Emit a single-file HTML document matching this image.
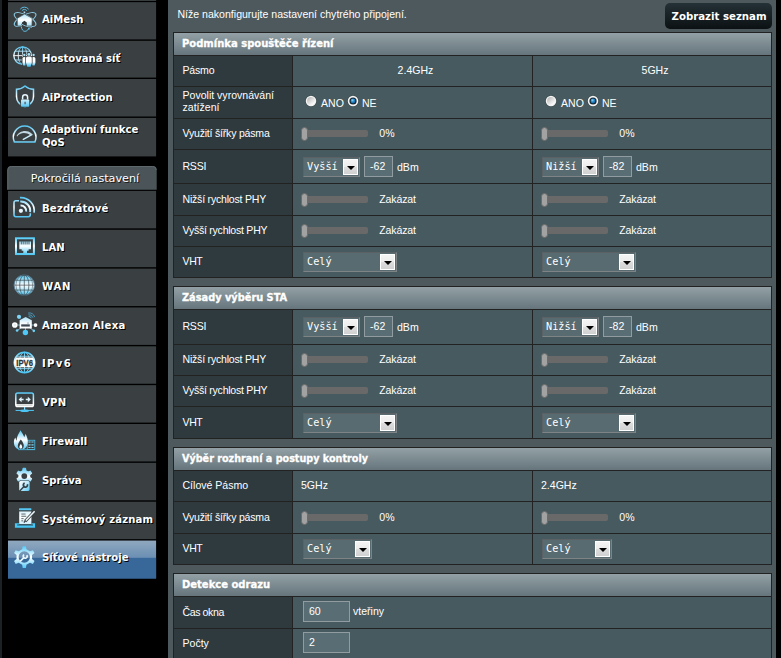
<!DOCTYPE html>
<html lang="cs"><head><meta charset="utf-8"><title>Smart Connect</title>
<style>
html,body{margin:0;padding:0;}
body{width:781px;height:658px;overflow:hidden;background:#000;position:relative;font-family:"Liberation Sans",Arial,sans-serif;font-size:10.55px;color:#fff;}
div{position:absolute;box-sizing:border-box;}
svg{position:absolute;left:0;top:0;}
.mt{left:42px;font-family:'DejaVu Sans',Verdana,sans-serif;font-weight:bold;font-size:10.1px;color:#fff;text-shadow:1px 1px 0 #000;white-space:nowrap;line-height:12.8px;}
.tb{background:#222;}
.hd{background:linear-gradient(to bottom,#93a1a6 0%,#66757c 100%);font-family:'DejaVu Sans',Verdana,sans-serif;font-weight:bold;font-size:10px;color:#fff;padding-left:8px;white-space:nowrap;-webkit-text-stroke:0.3px #fff;}
.th{background:#2f3a3e;padding-left:8px;line-height:12.8px;}
.th span.l2{line-height:11.9px;}
.th span{position:absolute;left:8.5px;white-space:nowrap;}
.td{background:#475a5f;}
.t{white-space:nowrap;line-height:13px;}
.trk{height:7px;border-radius:2px;background:#696969;}
.knb{width:7px;height:14px;border-radius:3.5px;background:#a2a2a2;border:1px solid #6c6c6c;}
.sel{background:#576b71;border:1px solid #5b6164;border-right-color:#7e8486;border-bottom-color:#7e8486;font-family:"DejaVu Sans Mono","Liberation Mono",monospace;font-size:10.2px;color:#fff;line-height:18px;padding-left:3px;white-space:nowrap;}
.arr{right:1px;top:1px;bottom:1px;width:15px;background:linear-gradient(to bottom,#f4f4f4 0%,#ececec 50%,#dddddd 50%,#d1d1d1 100%);border:1px solid #fff;}
.arr:after{content:"";position:absolute;left:2.5px;top:6px;border-left:4px solid transparent;border-right:4px solid transparent;border-top:4.5px solid #000;}
.inp{background:#596e74;border:1px solid #909ca0;color:#fff;padding-left:5px;white-space:nowrap;}
.rad{width:11px;height:11px;border-radius:50%;background:radial-gradient(circle at 55% 62%,#f8f8f8 0%,#e6e6e6 40%,#b4b4b4 80%,#8e9496 100%);box-shadow:0 0 0 0.5px #7b8385;}
.rad.on:after{content:"";position:absolute;left:2.8px;top:2.6px;width:5.4px;height:5.4px;border-radius:50%;background:radial-gradient(circle at 45% 35%,#6fc0ee 0%,#1b73b5 55%,#0e4f86 100%);}
</style></head>
<body>
<div style="left:0;top:0;width:2px;height:658px;background:#1b2124"></div>
<svg width="168" height="658" viewBox="0 0 168 658"><defs><linearGradient id="radg" x1="0.15" y1="0.1" x2="0.85" y2="0.9"><stop offset="0" stop-color="#bdbdbd"/><stop offset="1" stop-color="#ffffff"/></linearGradient><radialGradient id="radb" cx="0.4" cy="0.35" r="0.7"><stop offset="0" stop-color="#8ad2f6"/><stop offset="0.5" stop-color="#2288cc"/><stop offset="1" stop-color="#0e5c98"/></radialGradient><linearGradient id="selg" x1="0" y1="0" x2="0" y2="1"><stop offset="0" stop-color="#90a8bf"/><stop offset="0.45" stop-color="#6b8fb3"/><stop offset="0.451" stop-color="#386899"/><stop offset="1" stop-color="#386899"/></linearGradient></defs><rect x="8.00" y="0" width="148.10" height="0.95" fill="#3a4042"/><rect x="8.00" y="2.15" width="148.10" height="37.25" fill="#3a4042"/><rect x="8.00" y="40.80" width="148.10" height="36.80" fill="#3a4042"/><rect x="8.00" y="79.00" width="148.10" height="37.50" fill="#3a4042"/><rect x="8.00" y="117.90" width="148.10" height="38.50" fill="#3a4042"/><rect x="8.00" y="190.90" width="148.10" height="37.45" fill="#3a4042"/><rect x="8.00" y="229.75" width="148.10" height="37.45" fill="#3a4042"/><rect x="8.00" y="268.60" width="148.10" height="37.45" fill="#3a4042"/><rect x="8.00" y="307.45" width="148.10" height="37.45" fill="#3a4042"/><rect x="8.00" y="346.30" width="148.10" height="37.45" fill="#3a4042"/><rect x="8.00" y="385.15" width="148.10" height="37.45" fill="#3a4042"/><rect x="8.00" y="424.00" width="148.10" height="37.45" fill="#3a4042"/><rect x="8.00" y="462.85" width="148.10" height="37.45" fill="#3a4042"/><rect x="8.00" y="501.70" width="148.10" height="37.45" fill="#3a4042"/><rect x="8.00" y="540.55" width="148.10" height="37.95" fill="url(#selg)"/><rect x="8.00" y="557.85" width="148.10" height="20.65" fill="#386899"/><path d="M7.3,189.7 V170 a4,4 0 0 1 4,-4 H152.7 a4,4 0 0 1 4,4 V189.7 Z" fill="#4b5458"/><path d="M7.8,189.7 V170 a3.5,3.5 0 0 1 3.5,-3.5 H152.7 a3.5,3.5 0 0 1 3.5,3.5" fill="none" stroke="#5e686c" stroke-width="1"/><defs><linearGradient id="g_aimesh" gradientUnits="userSpaceOnUse" x1="0" y1="13.5" x2="0" y2="26.5"><stop offset="0" stop-color="#a8e0f7"/><stop offset="0.50" stop-color="#ffffff"/><stop offset="1" stop-color="#9ad9f5"/></linearGradient><linearGradient id="g_guest2" gradientUnits="userSpaceOnUse" x1="0" y1="56" x2="0" y2="66"><stop offset="0" stop-color="#e8f7fd"/><stop offset="0.25" stop-color="#ffffff"/><stop offset="0.6" stop-color="#ffffff"/><stop offset="1" stop-color="#4fc3f3"/></linearGradient><linearGradient id="g_guest" gradientUnits="userSpaceOnUse" x1="0" y1="46.5" x2="0" y2="65.5"><stop offset="0" stop-color="#4fc3f3"/><stop offset="0.50" stop-color="#ffffff"/><stop offset="1" stop-color="#4fc3f3"/></linearGradient><linearGradient id="g_aiprot" gradientUnits="userSpaceOnUse" x1="0" y1="86.0" x2="0" y2="107.0"><stop offset="0" stop-color="#4fc3f3"/><stop offset="0.50" stop-color="#ffffff"/><stop offset="1" stop-color="#4fc3f3"/></linearGradient><linearGradient id="g_qos" gradientUnits="userSpaceOnUse" x1="0" y1="126.0" x2="0" y2="143.0"><stop offset="0" stop-color="#55c6f4"/><stop offset="0.60" stop-color="#ffffff"/><stop offset="1" stop-color="#55c6f4"/></linearGradient><linearGradient id="g_wifi" gradientUnits="userSpaceOnUse" x1="0" y1="197.0" x2="0" y2="217.0"><stop offset="0" stop-color="#4fc3f3"/><stop offset="0.50" stop-color="#ffffff"/><stop offset="1" stop-color="#4fc3f3"/></linearGradient><linearGradient id="g_lan" gradientUnits="userSpaceOnUse" x1="0" y1="237.0" x2="0" y2="255.0"><stop offset="0" stop-color="#45c6f5"/><stop offset="0.50" stop-color="#ffffff"/><stop offset="1" stop-color="#45c6f5"/></linearGradient><linearGradient id="g_wan" gradientUnits="userSpaceOnUse" x1="0" y1="275.0" x2="0" y2="295.3"><stop offset="0" stop-color="#4ec3ee"/><stop offset="0.50" stop-color="#ffffff"/><stop offset="1" stop-color="#4ec3ee"/></linearGradient><linearGradient id="g_alexa" gradientUnits="userSpaceOnUse" x1="0" y1="317.0" x2="0" y2="328.5"><stop offset="0" stop-color="#a8e0f7"/><stop offset="0.50" stop-color="#f4fbfe"/><stop offset="1" stop-color="#ffffff"/></linearGradient><linearGradient id="g_ipv6" gradientUnits="userSpaceOnUse" x1="0" y1="352.0" x2="0" y2="372.8"><stop offset="0" stop-color="#48c4f4"/><stop offset="0.50" stop-color="#ffffff"/><stop offset="1" stop-color="#48c4f4"/></linearGradient><linearGradient id="g_vpn" gradientUnits="userSpaceOnUse" x1="0" y1="392.0" x2="0" y2="407.0"><stop offset="0" stop-color="#4dc6f6"/><stop offset="0.70" stop-color="#ffffff"/><stop offset="1" stop-color="#ffffff"/></linearGradient><linearGradient id="g_fw" gradientUnits="userSpaceOnUse" x1="0" y1="430.0" x2="0" y2="449.5"><stop offset="0" stop-color="#55c8f5"/><stop offset="0.50" stop-color="#ffffff"/><stop offset="1" stop-color="#55c8f5"/></linearGradient><linearGradient id="g_admin2" gradientUnits="userSpaceOnUse" x1="19" y1="481.0" x2="30" y2="491.0"><stop offset="0" stop-color="#ffffff"/><stop offset="0.5" stop-color="#bfe9fa"/><stop offset="1" stop-color="#4fc8f7"/></linearGradient><linearGradient id="g_admin" gradientUnits="userSpaceOnUse" x1="0" y1="468.0" x2="0" y2="484.0"><stop offset="0" stop-color="#55c8f5"/><stop offset="0.55" stop-color="#ffffff"/><stop offset="1" stop-color="#55c8f5"/></linearGradient><linearGradient id="g_log" gradientUnits="userSpaceOnUse" x1="0" y1="511.0" x2="0" y2="524.0"><stop offset="0" stop-color="#d9f2fc"/><stop offset="0.50" stop-color="#ffffff"/><stop offset="1" stop-color="#cfeefb"/></linearGradient><linearGradient id="g_tools" gradientUnits="userSpaceOnUse" x1="0" y1="546.0" x2="0" y2="568.0"><stop offset="0" stop-color="#4fcaf9"/><stop offset="0.50" stop-color="#ffffff"/><stop offset="1" stop-color="#4fcaf9"/></linearGradient></defs><g transform="translate(0,0.15)"><g fill="none" stroke="#8fd0ec" stroke-width="1" opacity="0.95"><ellipse cx="25.1" cy="19.3" rx="12.1" ry="4.5" transform="rotate(28 25.1 19.3)"/><ellipse cx="25.1" cy="19.3" rx="12.1" ry="4.5" transform="rotate(-28 25.1 19.3)"/></g><path d="M24.6,13.9 L32.2,18.1 L32.0,25.9 L17.3,25.9 L17.2,18.1 Z" fill="url(#g_aimesh)" stroke="#3a4042" stroke-width="0.7"/><path d="M22,25.9 V22.4 L24.4,20.7 L26.8,22.4 V25.9 Z" fill="#2f3538"/><path d="M21.2,26.3 C21.6,29.3 23.2,31.2 24.8,31.2 C26.3,31.2 27.6,30.3 28.6,28.6" fill="none" stroke="#5fc2ea" stroke-width="1"/><path d="M21.4,23.9 C23.4,25.6 27,26.9 31,27.3" fill="none" stroke="#3a4042" stroke-width="1.3"/><path d="M21.2,23.6 C23.4,25.3 27,26.6 32,27.1" fill="none" stroke="#9fd8f0" stroke-width="0.8"/><circle cx="28.9" cy="28.5" r="0.9" fill="#5fc2ea"/><circle cx="24.4" cy="12.2" r="1.1" fill="#bfe6f6" stroke="#3a4042" stroke-width="0.5"/><path d="M21.94,10.58 A3.00,3.00 0 0 1 26.86,10.58" fill="none" stroke="#5bbbe3" stroke-width="1"/><path d="M20.22,9.04 A5.30,5.30 0 0 1 28.58,9.04" fill="none" stroke="#5bbbe3" stroke-width="1"/></g><g transform="translate(0,-0.20)"><g fill="none" stroke="url(#g_guest)" stroke-width="0.9"><circle cx="22.6" cy="55.8" r="8.8" stroke-width="1.3"/><ellipse cx="22.6" cy="55.8" rx="4.4" ry="8.8"/><path d="M22.6,47 V64.6 M13.8,55.8 H31.4 M15,51.4 H30.2 M15,60.2 H30.2"/></g><path d="M22.50,58.80 q0,-1.5 1.5,-1.5 h0.60 q1.5,0 1.5,1.5 v4.40 l-0.81,2.60 h-1.98 l-0.81,-2.60 Z" fill="#3a4042" stroke="#3a4042" stroke-width="1.5"/><circle cx="24.30" cy="55.20" r="1.85" fill="#3a4042"/><path d="M22.50,58.80 q0,-1.5 1.5,-1.5 h0.60 q1.5,0 1.5,1.5 v4.40 l-0.81,2.60 h-1.98 l-0.81,-2.60 Z" fill="url(#g_guest2)"/><circle cx="24.30" cy="55.20" r="1.15" fill="#a8e3f9"/><path d="M31.80,58.80 q0,-1.5 1.5,-1.5 h0.60 q1.5,0 1.5,1.5 v4.40 l-0.81,2.60 h-1.98 l-0.81,-2.60 Z" fill="#3a4042" stroke="#3a4042" stroke-width="1.5"/><circle cx="33.60" cy="55.20" r="1.85" fill="#3a4042"/><path d="M31.80,58.80 q0,-1.5 1.5,-1.5 h0.60 q1.5,0 1.5,1.5 v4.40 l-0.81,2.60 h-1.98 l-0.81,-2.60 Z" fill="url(#g_guest2)"/><circle cx="33.60" cy="55.20" r="1.15" fill="#a8e3f9"/><path d="M26.00,58.10 q0,-1.5 1.5,-1.5 h2.80 q1.5,0 1.5,1.5 v5.20 l-1.30,3.60 h-3.19 l-1.30,-3.60 Z" fill="#3a4042" stroke="#3a4042" stroke-width="1.5"/><circle cx="28.90" cy="54.60" r="2.15" fill="#3a4042"/><path d="M26.00,58.10 q0,-1.5 1.5,-1.5 h2.80 q1.5,0 1.5,1.5 v5.20 l-1.30,3.60 h-3.19 l-1.30,-3.60 Z" fill="url(#g_guest2)"/><circle cx="28.90" cy="54.60" r="1.45" fill="#a8e3f9"/></g><g transform="translate(0,0.00)"><path d="M25,86 C27.4,88.1 30.4,89.2 33.5,89.3 L33.5,96.5 C33.5,101.5 29.6,105.2 25,107 C20.4,105.2 16.5,101.5 16.5,96.5 L16.5,89.3 C19.6,89.2 22.6,88.1 25,86 Z" fill="none" stroke="url(#g_aiprot)" stroke-width="1.5"/><rect x="20.3" y="98.6" width="9.6" height="9" fill="#3a4042"/><path d="M22.6,99.6 V97.2 a2.5,2.5 0 0 1 5,0 V99.6" fill="none" stroke="#e6f6fd" stroke-width="1.5"/><rect x="21" y="99.5" width="8.2" height="7.3" rx="0.8" fill="url(#g_aiprot)"/><path d="M25.1,101.8 V104.2" stroke="#4b5a62" stroke-width="1.3"/></g><g transform="translate(0,-0.10)"><path d="M14.4,142.2 A11.3,11.3 0 1 1 34.9,142.2 Z" fill="none" stroke="url(#g_qos)" stroke-width="1.5" stroke-linejoin="round"/><path d="M16.6,136.2 C18.5,131.2 26.5,128.8 31.8,133.6 L30.4,135.5 C26,131.6 19.5,132.6 17.2,136.6 Z" fill="#d8f1fb" opacity="0.85"/><path d="M23.3,139.4 L31.9,134.7" stroke="#c9ecfa" stroke-width="1.4" stroke-linecap="round"/></g><g transform="translate(0,0.05)"><path d="M19.0,200.7 H15.9 a1.9,1.9 0 0 0 -1.9,1.9 V214.7 a1.9,1.9 0 0 0 1.9,1.9 H28.4 a1.9,1.9 0 0 0 1.9,-1.9 V213.2" fill="none" stroke="url(#g_wifi)" stroke-width="1.5"/><circle cx="20.9" cy="210.8" r="2.1" fill="#e9f7fd"/><path d="M20.53,205.51 A5.30,5.30 0 0 1 26.15,211.54" fill="none" stroke="url(#g_wifi)" stroke-width="1.9"/><path d="M20.25,201.52 A9.30,9.30 0 0 1 30.11,212.09" fill="none" stroke="url(#g_wifi)" stroke-width="1.9"/><path d="M19.97,197.53 A13.30,13.30 0 0 1 34.07,212.65" fill="none" stroke="url(#g_wifi)" stroke-width="1.7"/></g><g transform="translate(0,0.05)"><rect x="16" y="238.2" width="17.9" height="15.8" fill="none" stroke="url(#g_lan)" stroke-width="2"/><path d="M19.3,241.4 H31 V249.2 H28.6 V250.7 H27 V253.2 H23.3 V250.7 H21.7 V249.2 H19.3 Z" fill="url(#g_lan)"/><path d="M21.3,241.2 V244.4 M23.2,241.2 V244.4 M25.15,241.2 V244.4 M27.1,241.2 V244.4 M29,241.2 V244.4" stroke="#3a4042" stroke-width="0.8"/></g><g transform="translate(0,0.05)"><circle cx="24.3" cy="285.1" r="10.2" fill="url(#g_wan)" stroke="#5f8298" stroke-width="0.9"/><g fill="none" stroke="#3c4a51" stroke-width="0.7"><ellipse cx="24.3" cy="285.1" rx="4.6" ry="10.2"/><ellipse cx="24.3" cy="285.1" rx="8.4" ry="10.2" stroke-width="0.5"/><path d="M24.3,274.9 V295.3 M14.1,285.1 H34.5 M15.6,280.2 H33 M15.6,290 H33"/></g></g><g transform="translate(0,0.05)"><path d="M17.5,325 H33.5 M25.5,328 V331 M20.5,318 L19,316.8 M21,328 L17.2,330.4 M30,328 L33.8,330.6" stroke="#9ad8f2" stroke-width="0.7"/><path d="M25.6,317 L31.8,320.3 V328.5 H19.6 V320.3 Z" fill="url(#g_alexa)"/><rect x="21.2" y="324.3" width="8.6" height="2.2" fill="#3d4850"/><path d="M28,324.3 V322.2" stroke="#6f8792" stroke-width="0.7"/><circle cx="14.8" cy="325" r="2.8" fill="#ffffff"/><circle cx="14.8" cy="325" r="1.2" fill="#e0eef5"/><circle cx="35.5" cy="325" r="1.9" fill="#ffffff"/><circle cx="19" cy="316.8" r="2.1" fill="#7cd6f8"/><circle cx="25.4" cy="332.5" r="2.7" fill="#4fc8f7"/><circle cx="17.1" cy="330.4" r="1.3" fill="#6fd2f8"/><circle cx="33.8" cy="330.8" r="1.3" fill="#6fd2f8"/><path d="M28.67,316.52 A2.40,2.40 0 0 1 31.28,318.16" fill="none" stroke="#4fb3dc" stroke-width="0.85" opacity="0.9"/><path d="M28.42,314.74 A4.20,4.20 0 0 1 32.99,317.60" fill="none" stroke="#4fb3dc" stroke-width="0.85" opacity="0.9"/><path d="M28.16,312.96 A6.00,6.00 0 0 1 34.71,317.05" fill="none" stroke="#4fb3dc" stroke-width="0.85" opacity="0.9"/></g><g transform="translate(0,0.05)"><g fill="none" stroke="url(#g_ipv6)" stroke-width="0.9"><ellipse cx="24.5" cy="362.4" rx="5.2" ry="10.2"/><path d="M24.5,352.2 V372.6 M16.4,356.2 H32.6 M16.4,368.6 H32.6"/></g><path d="M15.45,357.4 H33.55 A10.3,10.3 0 0 1 33.55,367.2 H15.45 A10.3,10.3 0 0 1 15.45,357.4 Z" fill="#ffffff"/><circle cx="24.5" cy="362.4" r="10.2" fill="none" stroke="url(#g_ipv6)" stroke-width="1.5"/><text x="24.6" y="365.9" text-anchor="middle" font-family="'Liberation Sans',Arial,sans-serif" font-weight="bold" font-size="9.6" fill="#2c373d" stroke="#2c373d" stroke-width="0.3" textLength="16.6" lengthAdjust="spacingAndGlyphs">IPV6</text></g><g transform="translate(0,0.05)"><rect x="15.8" y="392.9" width="17.6" height="13.6" rx="1.8" fill="none" stroke="url(#g_vpn)" stroke-width="1.5"/><path d="M16,404.9 H33.2" stroke="#ffffff" stroke-width="1.6"/><path d="M24.6,407 V410.2" stroke="#8fdaf8" stroke-width="1.2"/><path d="M15.6,410.4 H33.9" stroke="#4dc6f6" stroke-width="1"/><ellipse cx="24.6" cy="410.7" rx="4.6" ry="1.3" fill="#4dc6f6"/><path d="M18.6,399.4 L21.6,396.6 V398.6 H23.6 V400.2 H21.6 V402.2 Z M30.8,399.4 L27.8,396.6 V398.6 H25.8 V400.2 H27.8 V402.2 Z" fill="#dff3fc"/></g><g transform="translate(0,0.05)"><rect x="27.2" y="440.2" width="7.6" height="9.3" fill="none" stroke="#4bbfe9" stroke-width="0.8"/><path d="M28.4,442 H33.6 M28.4,444.8 H33.6 M28.4,447.4 H33.6" stroke="#7ed0ee" stroke-width="1.1" stroke-dasharray="2.2 0.8"/><path d="M18.2,449.6 H34.8" stroke="#4bbfe9" stroke-width="0.8"/><path d="M20.6,430.2 C21.6,432.6 23.4,434.2 24.2,437.2 C24.8,436 25.2,434.8 25.4,433.6 C27.2,436.4 28.2,440.2 27.6,443.6 C27.2,446.2 25.6,448.2 23.4,449.2 L18.2,449.2 C15.6,448 14,445.6 13.9,442.6 C13.8,440.6 14.4,438.8 15.4,437.4 C15.6,438.8 16,439.8 16.6,440.6 C16.6,436.4 18.6,433.6 20.6,430.2 Z" fill="url(#g_fw)"/><path d="M20.8,439.4 C22.6,441.6 23.8,443.6 23.8,445.6 C23.8,447.6 22.5,449 20.8,449 C19.1,449 17.8,447.6 17.8,445.6 C17.8,443.6 19.2,441.6 20.8,439.4 Z" fill="#333d42"/><path d="M20.8,444 C21.7,445.2 22.2,446.1 22.2,447 C22.2,448 21.6,448.7 20.8,448.7 C20,448.7 19.4,448 19.4,447 C19.4,446.1 20,445.2 20.8,444 Z" fill="#f2fbff"/></g><g transform="translate(0,0.05)"><path d="M22.77,470.72 L23.10,468.39 L25.50,468.39 L25.83,470.72 L28.11,472.03 L30.28,471.15 L31.49,473.24 L29.64,474.69 L29.64,477.31 L31.49,478.76 L30.28,480.85 L28.11,479.97 L25.83,481.28 L25.50,483.61 L23.10,483.61 L22.77,481.28 L20.49,479.97 L18.32,480.85 L17.11,478.76 L18.96,477.31 L18.96,474.69 L17.11,473.24 L18.32,471.15 L20.49,472.03 Z" fill="url(#g_admin)" stroke="url(#g_admin)" stroke-width="1.2" stroke-linejoin="round"/><circle cx="24.3" cy="476" r="2.9" fill="#3a4042"/><rect x="18.6" y="480.4" width="11.6" height="11" rx="1.6" fill="#3a4042"/><rect x="19.2" y="481" width="10.4" height="9.9" rx="1.4" fill="url(#g_admin2)"/><path d="M20.2,490.4 L24.2,486.2" stroke="#35424a" stroke-width="1.5" stroke-linecap="round"/><path d="M27.37,484.28 A2.10,2.10 0 1 1 24.68,483.03" fill="none" stroke="#35424a" stroke-width="1.7"/></g><g transform="translate(0,0.05)"><rect x="19" y="508.2" width="12.4" height="1.9" rx="0.6" fill="#55c8f5"/><rect x="19.2" y="511.4" width="12.2" height="12.6" fill="url(#g_log)"/><path d="M21.3,514 H25.6 M21.3,516.2 H26.2 M21.3,518.6 H23.6 M21.3,520.8 H23.2" stroke="#4a5860" stroke-width="0.9"/><path d="M14.9,523.2 H19.2 V524.6 H31.4 V523.2 H35.1 V527.8 H14.9 Z" fill="#45c6f5"/><path d="M17.2,524.9 H33" stroke="#35505e" stroke-width="1.3" opacity="0.85"/><path d="M34.6,511.2 L25.2,521.2" stroke="#3a4042" stroke-width="3.2"/><path d="M34.6,511.2 L25.2,521.2" stroke="#eef9fe" stroke-width="1.5"/><path d="M26,520.4 L23.8,522.4" stroke="#35424a" stroke-width="1.3"/></g><g transform="translate(0,0.05)"><path fill-rule="evenodd" d="M22.15,549.29 L22.69,546.12 L25.91,546.12 L26.45,549.29 L29.90,551.28 L32.92,550.17 L34.53,552.95 L32.05,555.01 L32.05,558.99 L34.53,561.05 L32.92,563.83 L29.90,562.72 L26.45,564.71 L25.91,567.88 L22.69,567.88 L22.15,564.71 L18.70,562.72 L15.68,563.83 L14.07,561.05 L16.55,558.99 L16.55,555.01 L14.07,552.95 L15.68,550.17 L18.70,551.28 Z M30.0,557 A5.7,5.7 0 1 0 18.6,557 A5.7,5.7 0 1 0 30.0,557 Z" fill="url(#g_tools)"/><path d="M20.6,560.8 L23.8,557.6" stroke="#eaf7fd" stroke-width="1.7" stroke-linecap="round"/><path d="M26.76,555.11 A1.90,1.90 0 1 1 24.11,554.64" fill="none" stroke="#eaf7fd" stroke-width="1.6"/></g></svg>
<div class="mt" style="top:14.0px">AiMesh</div>
<div class="mt" style="top:53.0px">Hostovaná síť</div>
<div class="mt" style="top:91.9px">AiProtection</div>
<div class="mt" style="top:124.0px">Adaptivní funkce<br>QoS</div>
<div class="mt" style="top:203.1px;letter-spacing:0.18px">Bezdrátové</div>
<div class="mt" style="top:241.9px">LAN</div>
<div class="mt" style="top:280.7px;letter-spacing:0.75px">WAN</div>
<div class="mt" style="top:319.5px;letter-spacing:0.3px">Amazon Alexa</div>
<div class="mt" style="top:358.3px;letter-spacing:1.3px">IPv6</div>
<div class="mt" style="top:397.1px;letter-spacing:0.3px">VPN</div>
<div class="mt" style="top:435.9px">Firewall</div>
<div class="mt" style="top:474.7px">Správa</div>
<div class="mt" style="top:513.5px;letter-spacing:0.15px">Systémový záznam</div>
<div class="mt" style="top:552.3px">Síťové nástroje</div>
<div class="t" style="left:10px;top:171.6px;width:150px;text-align:center;font-family:'DejaVu Sans',Verdana,sans-serif;font-size:11.2px;color:#fff;text-shadow:1px 1px 0 #1a1a1a">Pokročilá nastavení</div>
<div style="left:168px;top:0;width:608px;height:658px;background:#4d595d"></div>
<div class="t" style="left:177.5px;top:8px;">Níže nakonfigurujte nastavení chytrého připojení.</div>
<div style="left:665px;top:3px;width:107px;height:26px;border-radius:5px;background:linear-gradient(to bottom,#243136 0%,#0c1113 100%);"></div>
<div class="t" style="left:671.5px;top:9.5px;font-family:'DejaVu Sans',Verdana,sans-serif;font-weight:bold;font-size:10.2px;">Zobrazit seznam</div>
<div class="tb" style="left:173px;top:32px;width:599px;height:246px"></div>
<div class="hd" style="left:174px;top:33px;width:597px;height:22px;line-height:22px;font-size:10px">Podmínka spouštěče řízení</div>
<div class="th" style="left:174px;top:56px;width:118px;height:30px"><span style="top:8.3px"><i style="font-style:normal;letter-spacing:-0.2px">Pásmo</i></span></div>
<div class="td" style="left:293px;top:56px;width:239px;height:30px"></div>
<div class="td" style="left:533px;top:56px;width:238px;height:30px"></div>
<div class="t" style="left:293px;top:64px;width:245px;text-align:center">2.4GHz</div>
<div class="t" style="left:533px;top:64px;width:244px;text-align:center">5GHz</div>
<div class="th" style="left:174px;top:87px;width:118px;height:31px"><span class="l2" style="top:3.0px">Povolit vyrovnávání<br style="line-height:12px">zatížení</span></div>
<div class="td" style="left:293px;top:87px;width:239px;height:31px"></div>
<div class="td" style="left:533px;top:87px;width:238px;height:31px"></div>
<svg width="14" height="14" viewBox="0 0 14 14" style="left:303.8px;top:93.7px"><circle cx="7" cy="7" r="5.75" fill="#3b494d"/><circle cx="7" cy="7" r="5.25" fill="#f3f3f3"/><circle cx="7" cy="7" r="3.9" fill="url(#radg)"/></svg><div class="t" style="left:321px;top:97px;">ANO</div><svg width="14" height="14" viewBox="0 0 14 14" style="left:345.8px;top:93.7px"><circle cx="7" cy="7" r="5.75" fill="#3b494d"/><circle cx="7" cy="7" r="5.25" fill="#f3f3f3"/><circle cx="7" cy="7" r="3.6" fill="#15252f"/><circle cx="7" cy="7" r="2.45" fill="url(#radb)"/></svg><div class="t" style="left:362px;top:97px;">NE</div>
<svg width="14" height="14" viewBox="0 0 14 14" style="left:543.8px;top:93.7px"><circle cx="7" cy="7" r="5.75" fill="#3b494d"/><circle cx="7" cy="7" r="5.25" fill="#f3f3f3"/><circle cx="7" cy="7" r="3.9" fill="url(#radg)"/></svg><div class="t" style="left:561px;top:97px;">ANO</div><svg width="14" height="14" viewBox="0 0 14 14" style="left:585.8px;top:93.7px"><circle cx="7" cy="7" r="5.75" fill="#3b494d"/><circle cx="7" cy="7" r="5.25" fill="#f3f3f3"/><circle cx="7" cy="7" r="3.6" fill="#15252f"/><circle cx="7" cy="7" r="2.45" fill="url(#radb)"/></svg><div class="t" style="left:602px;top:97px;">NE</div>
<div class="th" style="left:174px;top:119px;width:118px;height:30px"><span style="top:8.3px"><i style="font-style:normal;letter-spacing:-0.21px">Využití šířky pásma</i></span></div>
<div class="td" style="left:293px;top:119px;width:239px;height:30px"></div>
<div class="td" style="left:533px;top:119px;width:238px;height:30px"></div>
<div class="trk" style="left:304px;top:130px;width:64px"></div><div class="knb" style="left:301.2px;top:126.8px"></div><div class="t" style="left:379.3px;top:126.5px;">0%</div>
<div class="trk" style="left:544px;top:130px;width:64px"></div><div class="knb" style="left:541.2px;top:126.8px"></div><div class="t" style="left:619.3px;top:126.5px;">0%</div>
<div class="th" style="left:174px;top:150px;width:118px;height:33px"><span style="top:9.8px"><i style="font-style:normal;letter-spacing:-0.25px">RSSI</i></span></div>
<div class="td" style="left:293px;top:150px;width:239px;height:33px"></div>
<div class="td" style="left:533px;top:150px;width:238px;height:33px"></div>
<div class="sel" style="left:303px;top:157px;width:57px;height:20px">Vyšší<div class="arr"></div></div><div class="inp" style="left:364px;top:156px;width:29px;height:21px;line-height:19px">-62</div><div class="t" style="left:397px;top:161px;">dBm</div>
<div class="sel" style="left:542px;top:157px;width:57px;height:20px">Nižší<div class="arr"></div></div><div class="inp" style="left:603px;top:156px;width:29px;height:21px;line-height:19px">-82</div><div class="t" style="left:636px;top:161px;">dBm</div>
<div class="th" style="left:174px;top:184px;width:118px;height:31px"><span style="top:8.8px"><i style="font-style:normal;letter-spacing:-0.21px">Nižší rychlost PHY</i></span></div>
<div class="td" style="left:293px;top:184px;width:239px;height:31px"></div>
<div class="td" style="left:533px;top:184px;width:238px;height:31px"></div>
<div class="trk" style="left:304px;top:196px;width:64px"></div><div class="knb" style="left:301.2px;top:192.8px"></div><div class="t" style="left:379.3px;top:192.5px;letter-spacing:-0.15px;">Zakázat</div>
<div class="trk" style="left:544px;top:196px;width:64px"></div><div class="knb" style="left:541.2px;top:192.8px"></div><div class="t" style="left:619.3px;top:192.5px;letter-spacing:-0.15px;">Zakázat</div>
<div class="th" style="left:174px;top:216px;width:118px;height:30px"><span style="top:8.3px"><i style="font-style:normal;letter-spacing:-0.25px">Vyšší rychlost PHY</i></span></div>
<div class="td" style="left:293px;top:216px;width:239px;height:30px"></div>
<div class="td" style="left:533px;top:216px;width:238px;height:30px"></div>
<div class="trk" style="left:304px;top:227px;width:64px"></div><div class="knb" style="left:301.2px;top:223.8px"></div><div class="t" style="left:379.3px;top:223.5px;letter-spacing:-0.15px;">Zakázat</div>
<div class="trk" style="left:544px;top:227px;width:64px"></div><div class="knb" style="left:541.2px;top:223.8px"></div><div class="t" style="left:619.3px;top:223.5px;letter-spacing:-0.15px;">Zakázat</div>
<div class="th" style="left:174px;top:247px;width:118px;height:30px"><span style="top:8.3px"><i style="font-style:normal;letter-spacing:-0.4px">VHT</i></span></div>
<div class="td" style="left:293px;top:247px;width:239px;height:30px"></div>
<div class="td" style="left:533px;top:247px;width:238px;height:30px"></div>
<div class="sel" style="left:303px;top:252px;width:94px;height:20px">Celý<div class="arr"></div></div>
<div class="sel" style="left:542px;top:252px;width:94px;height:20px">Celý<div class="arr"></div></div>
<div class="tb" style="left:173px;top:286px;width:599px;height:153px"></div>
<div class="hd" style="left:174px;top:287px;width:597px;height:22px;line-height:22px;font-size:9.8px">Zásady výběru STA</div>
<div class="th" style="left:174px;top:310px;width:118px;height:34px"><span style="top:10.3px"><i style="font-style:normal;letter-spacing:-0.25px">RSSI</i></span></div>
<div class="td" style="left:293px;top:310px;width:239px;height:34px"></div>
<div class="td" style="left:533px;top:310px;width:238px;height:34px"></div>
<div class="sel" style="left:303px;top:317px;width:57px;height:20px">Vyšší<div class="arr"></div></div><div class="inp" style="left:364px;top:316px;width:29px;height:21px;line-height:19px">-62</div><div class="t" style="left:397px;top:321px;">dBm</div>
<div class="sel" style="left:542px;top:317px;width:57px;height:20px">Nižší<div class="arr"></div></div><div class="inp" style="left:603px;top:316px;width:29px;height:21px;line-height:19px">-82</div><div class="t" style="left:636px;top:321px;">dBm</div>
<div class="th" style="left:174px;top:345px;width:118px;height:30px"><span style="top:8.3px"><i style="font-style:normal;letter-spacing:-0.21px">Nižší rychlost PHY</i></span></div>
<div class="td" style="left:293px;top:345px;width:239px;height:30px"></div>
<div class="td" style="left:533px;top:345px;width:238px;height:30px"></div>
<div class="trk" style="left:304px;top:356px;width:64px"></div><div class="knb" style="left:301.2px;top:352.8px"></div><div class="t" style="left:379.3px;top:352.5px;letter-spacing:-0.15px;">Zakázat</div>
<div class="trk" style="left:544px;top:356px;width:64px"></div><div class="knb" style="left:541.2px;top:352.8px"></div><div class="t" style="left:619.3px;top:352.5px;letter-spacing:-0.15px;">Zakázat</div>
<div class="th" style="left:174px;top:376px;width:118px;height:30px"><span style="top:8.3px"><i style="font-style:normal;letter-spacing:-0.25px">Vyšší rychlost PHY</i></span></div>
<div class="td" style="left:293px;top:376px;width:239px;height:30px"></div>
<div class="td" style="left:533px;top:376px;width:238px;height:30px"></div>
<div class="trk" style="left:304px;top:387px;width:64px"></div><div class="knb" style="left:301.2px;top:383.8px"></div><div class="t" style="left:379.3px;top:383.5px;letter-spacing:-0.15px;">Zakázat</div>
<div class="trk" style="left:544px;top:387px;width:64px"></div><div class="knb" style="left:541.2px;top:383.8px"></div><div class="t" style="left:619.3px;top:383.5px;letter-spacing:-0.15px;">Zakázat</div>
<div class="th" style="left:174px;top:407px;width:118px;height:31px"><span style="top:8.8px"><i style="font-style:normal;letter-spacing:-0.4px">VHT</i></span></div>
<div class="td" style="left:293px;top:407px;width:239px;height:31px"></div>
<div class="td" style="left:533px;top:407px;width:238px;height:31px"></div>
<div class="sel" style="left:303px;top:413px;width:94px;height:20px">Celý<div class="arr"></div></div>
<div class="sel" style="left:542px;top:413px;width:94px;height:20px">Celý<div class="arr"></div></div>
<div class="tb" style="left:173px;top:447px;width:599px;height:118px"></div>
<div class="hd" style="left:174px;top:448px;width:597px;height:22px;line-height:22px;font-size:9.63px">Výběr rozhraní a postupy kontroly</div>
<div class="th" style="left:174px;top:471px;width:118px;height:30px"><span style="top:8.3px">Cílové Pásmo</span></div>
<div class="td" style="left:293px;top:471px;width:239px;height:30px"></div>
<div class="td" style="left:533px;top:471px;width:238px;height:30px"></div>
<div class="t" style="left:301px;top:479px;">5GHz</div>
<div class="t" style="left:541px;top:479px;">2.4GHz</div>
<div class="th" style="left:174px;top:502px;width:118px;height:31px"><span style="top:8.8px"><i style="font-style:normal;letter-spacing:-0.21px">Využití šířky pásma</i></span></div>
<div class="td" style="left:293px;top:502px;width:239px;height:31px"></div>
<div class="td" style="left:533px;top:502px;width:238px;height:31px"></div>
<div class="trk" style="left:304px;top:514px;width:64px"></div><div class="knb" style="left:301.2px;top:510.8px"></div><div class="t" style="left:379.3px;top:510.5px;">0%</div>
<div class="trk" style="left:544px;top:514px;width:64px"></div><div class="knb" style="left:541.2px;top:510.8px"></div><div class="t" style="left:619.3px;top:510.5px;">0%</div>
<div class="th" style="left:174px;top:534px;width:118px;height:30px"><span style="top:8.3px"><i style="font-style:normal;letter-spacing:-0.4px">VHT</i></span></div>
<div class="td" style="left:293px;top:534px;width:239px;height:30px"></div>
<div class="td" style="left:533px;top:534px;width:238px;height:30px"></div>
<div class="sel" style="left:303px;top:539px;width:69px;height:20px">Celý<div class="arr"></div></div>
<div class="sel" style="left:542px;top:539px;width:70px;height:20px">Celý<div class="arr"></div></div>
<div class="tb" style="left:173px;top:573px;width:599px;height:85px"></div>
<div class="hd" style="left:174px;top:574px;width:597px;height:22px;line-height:22px;font-size:10px">Detekce odrazu</div>
<div class="th" style="left:174px;top:597px;width:118px;height:31px"><span style="top:8.8px"><i style="font-style:normal;letter-spacing:-0.4px">Čas okna</i></span></div>
<div class="td" style="left:293px;top:597px;width:478px;height:31px"></div>
<div class="inp" style="left:303px;top:601px;width:47px;height:21px;line-height:19px">60</div><div class="t" style="left:353px;top:605px;">vteřiny</div>
<div class="th" style="left:174px;top:629px;width:118px;height:29px"><span style="top:7.8px">Počty</span></div>
<div class="td" style="left:293px;top:629px;width:478px;height:29px"></div>
<div class="inp" style="left:303px;top:632px;width:47px;height:21px;line-height:19px">2</div>
</body></html>
